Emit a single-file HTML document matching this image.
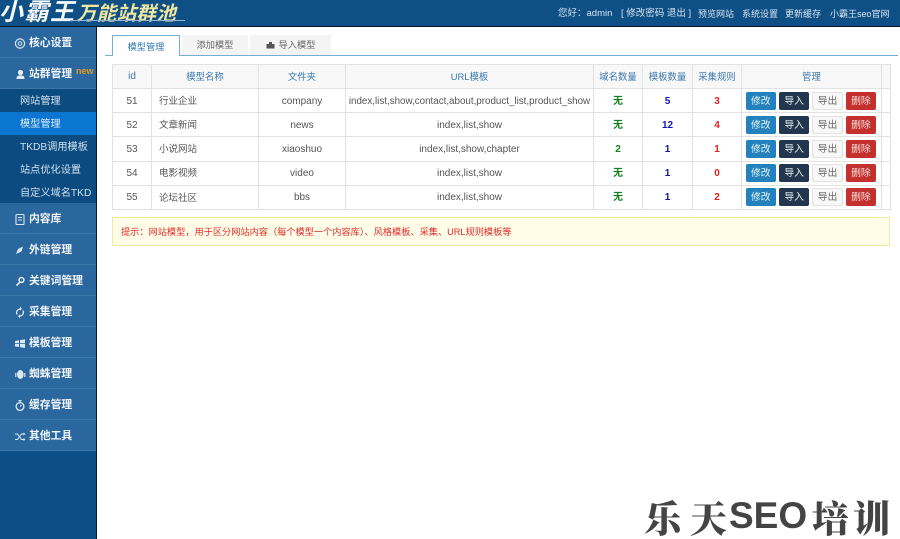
<!DOCTYPE html>
<html lang="zh"><head><meta charset="utf-8"><title>模型管理</title>
<style>
*{box-sizing:border-box}
html,body{margin:0;padding:0;width:900px;height:539px;overflow:hidden;background:#fff}
body{position:relative;font:9.5px/1 "Liberation Sans","Noto Sans CJK SC",sans-serif;color:#555}
.a{position:absolute;white-space:nowrap}
#hd{position:absolute;left:0;top:0;width:900px;height:27px;background:#0e4f86;border-bottom:1px solid #06192b}
#side{position:absolute;left:0;top:27px;width:97px;height:512px;background:#0c4e86;border-right:1px solid #06192b}
.m{position:absolute;left:0;width:96px;height:31px;background:#2a679f;border-bottom:1px solid #3d77aa;color:#f2f6fa;font-size:10.8px;font-weight:bold;line-height:32px;padding-left:29px;white-space:nowrap}
.m svg{position:absolute;left:14px;top:10px;width:12px;height:13px}
.s{position:absolute;left:0;width:96px;height:23px;color:#cfe0ee;font-size:10.2px;line-height:25px;padding-left:20px;white-space:nowrap}
.tab{position:absolute;top:35px;height:20px;background:#f4f4f4;color:#666;font-size:9.2px;line-height:21px;text-align:center}
table{position:absolute;left:112px;top:64px;width:778px;height:146px;border-collapse:collapse;table-layout:fixed;font-size:10px}
td,th{border:1px solid #e2e2e2;padding:0;text-align:center;overflow:hidden;white-space:nowrap}
th{background:#f8f8f8;color:#3a78ae;font-weight:normal;font-size:9.4px;height:24px}
td{color:#555;height:24.2px;padding-top:2px}
td.l{text-align:left;padding-left:7px;font-size:9.5px}
td:nth-child(8){padding:0 0 0 3.500px;text-align:left}
b.g{color:#14801e}b.b{color:#1414b4}b.r{color:#e02020}
.b1{display:inline-block;width:30.500px;height:18px;line-height:19px;border-radius:2px;font-size:9.800px;margin-right:2.900px;vertical-align:middle;text-align:center}
.x{background:#2382be;color:#e8f3fa}.y{background:#22364e;color:#eef1f4}.z{background:#f8f8f8;color:#666;border:1px solid #e2e2e2;line-height:17px}.w{background:#c4302c;color:#f6dcdc;margin-right:0}
.wm{position:absolute;top:493px;font:900 37px/46px 'Noto Serif CJK SC','Liberation Serif',serif;color:#444;white-space:nowrap}
</style></head><body>
<div id="hd">
<div class="a" style="left:-1px;top:-1px;font:italic bold 24px/28px 'Liberation Sans','Noto Sans CJK SC',sans-serif;color:#f4f8fb;letter-spacing:1.500px">小霸王</div>
<div class="a" style="left:77px;top:3px;font:italic bold 19.500px/23px 'Liberation Sans','Noto Sans CJK SC',sans-serif;color:#f0e6a0;letter-spacing:.300px">万能站群池</div>
<div class="a" style="left:70px;top:20px;width:115px;height:1px;background:#8fb4d4"></div>
<div class="a" style="left:558px;top:8px;font-size:9.500px;line-height:12px;color:#d6e4ef">您好：admin</div>
<div class="a" style="left:621px;top:8px;font-size:9.500px;line-height:12px;color:#d6e4ef">[ 修改密码 退出 ]</div>
<div class="a" style="left:698px;top:8px;font-size:9px;line-height:12px;color:#d6e4ef">预览网站</div>
<div class="a" style="left:742px;top:8px;font-size:9px;line-height:12px;color:#d6e4ef">系统设置</div>
<div class="a" style="left:785px;top:8px;font-size:9px;line-height:12px;color:#d6e4ef">更新缓存</div>
<div class="a" style="left:830px;top:8px;font-size:9px;line-height:12px;color:#d6e4ef">小霸王seo官网</div>
</div>
<div id="side"></div>
<div class="m" style="top:27px"><svg viewBox="0 0 12 13"><circle cx="6" cy="6.500" r="4.600" fill="none" stroke="#dbe7f1" stroke-width="1.200"/><circle cx="6" cy="6.500" r="1.800" fill="none" stroke="#dbe7f1"/></svg>核心设置</div>
<div class="m" style="top:58px"><svg viewBox="0 0 12 13"><circle cx="6.500" cy="4.500" r="2.600" fill="#e6eef5"/><path d="M2.500 11c0-3 1.500-3.600 4-3.600s4 .6 4 3.600z" fill="#e6eef5"/></svg>站群管理<span class="a" style="left:76px;top:8px;font:bold 9px/10px 'Liberation Sans',sans-serif;color:#e59b20">new</span></div>
<div class="a" style="left:0;top:89px;width:96px;height:114px;background:#0c4b80"></div>
<div class="s" style="top:89px">网站管理</div>
<div class="s" style="top:112px;background:#0a76d2;color:#dcecf8">模型管理</div>
<div class="s" style="top:135px">TKDB调用模板</div>
<div class="s" style="top:158px">站点优化设置</div>
<div class="s" style="top:181px">自定义域名TKD</div>
<div class="m" style="top:203px"><svg viewBox="0 0 12 13"><rect x="2" y="1.500" width="8" height="10" rx="1" fill="none" stroke="#dbe7f1" stroke-width="1.100"/><path d="M4 4.500h4M4 7h4" stroke="#dbe7f1"/></svg>内容库</div>
<div class="m" style="top:234px"><svg viewBox="0 0 12 13"><path d="M2 10l2-5 5-2.500-1.500 5z" fill="#dbe7f1"/></svg>外链管理</div>
<div class="m" style="top:265px"><svg viewBox="0 0 12 13"><circle cx="7.500" cy="5" r="2.400" fill="none" stroke="#e6eef5" stroke-width="1.500"/><path d="M6 7l-3.500 3.500" stroke="#e6eef5" stroke-width="1.600"/></svg>关键词管理</div>
<div class="m" style="top:296px"><svg viewBox="0 0 12 13"><path d="M3 8.500a3.800 3.800 0 0 1 3-5.500M9 4.500a3.800 3.800 0 0 1-3 5.500" fill="none" stroke="#dbe7f1" stroke-width="1.300"/><path d="M6 .8v4l2-2zM6 12.200v-4l-2 2z" fill="#dbe7f1"/></svg>采集管理</div>
<div class="m" style="top:327px"><svg viewBox="0 0 12 13"><path d="M1 4l4-.7v3H1zM6 3.100l5-.9v4.100H6zM1 7h4v3l-4-.6zM6 7h5v4l-5-.9z" fill="#dbe7f1"/></svg>模板管理</div>
<div class="m" style="top:358px"><svg viewBox="0 0 12 13"><ellipse cx="6.300" cy="6.500" rx="3.300" ry="4.500" fill="#dbe7f1"/><path d="M1.800 5v4M10.800 5v4" stroke="#dbe7f1" stroke-width="1.200"/></svg>蜘蛛管理</div>
<div class="m" style="top:389px"><svg viewBox="0 0 12 13"><circle cx="6" cy="7.500" r="3.900" fill="none" stroke="#e6eef5" stroke-width="1.300"/><path d="M4.500 1.500h3M6 1.500v2M6 7.500l1.500-1.500" stroke="#e6eef5" stroke-width="1.100"/></svg>缓存管理</div>
<div class="m" style="top:420px"><svg viewBox="0 0 12 13"><path d="M1 4h2.500l4 5.500H10M1 9.500h2.500l4-5.500H10" fill="none" stroke="#dbe7f1"/><path d="M9.500 2.500l2 1.500-2 1.500zM9.500 8l2 1.500-2 1.500z" fill="#dbe7f1"/></svg>其他工具</div>

<div class="a" style="left:105px;top:55px;width:793px;height:1px;background:#74aed0"></div>
<div class="tab" style="left:112px;top:35px;width:68px;height:21px;background:#fff;border:1px solid #74aed0;border-bottom:0;color:#2f75b0;line-height:23px">模型管理</div>
<div class="tab" style="left:182px;width:66px">添加模型</div>
<div class="tab" style="left:250px;width:81px"><svg width="9" height="9" viewBox="0 0 9 9" style="vertical-align:-1px;margin-right:4px"><path d="M3 4V2h3v2h2.500v4.500H.5V4z" fill="#555"/></svg>导入模型</div>

<table>
<colgroup><col style="width:39px"><col style="width:107px"><col style="width:87px"><col style="width:248px"><col style="width:49px"><col style="width:50px"><col style="width:49px"><col style="width:140px"><col style="width:9px"></colgroup>
<tr><th style="font-size:10px">id</th><th>模型名称</th><th>文件夹</th><th>URL模板</th><th>域名数量</th><th>模板数量</th><th>采集规则</th><th>管理</th><th></th></tr>
<tr><td>51</td><td class="l">行业企业</td><td>company</td><td style="font-size:9.800px">index,list,show,contact,about,product_list,product_show</td><td><b class="g">无</b></td><td><b class="b">5</b></td><td><b class="r">3</b></td><td><span class="b1 x">修改</span><span class="b1 y">导入</span><span class="b1 z">导出</span><span class="b1 w">删除</span></td><td></td></tr>
<tr><td>52</td><td class="l">文章新闻</td><td>news</td><td>index,list,show</td><td><b class="g">无</b></td><td><b class="b">12</b></td><td><b class="r">4</b></td><td><span class="b1 x">修改</span><span class="b1 y">导入</span><span class="b1 z">导出</span><span class="b1 w">删除</span></td><td></td></tr>
<tr><td>53</td><td class="l">小说网站</td><td>xiaoshuo</td><td>index,list,show,chapter</td><td><b class="g">2</b></td><td><b class="b">1</b></td><td><b class="r">1</b></td><td><span class="b1 x">修改</span><span class="b1 y">导入</span><span class="b1 z">导出</span><span class="b1 w">删除</span></td><td></td></tr>
<tr><td>54</td><td class="l">电影视频</td><td>video</td><td>index,list,show</td><td><b class="g">无</b></td><td><b class="b">1</b></td><td><b class="r">0</b></td><td><span class="b1 x">修改</span><span class="b1 y">导入</span><span class="b1 z">导出</span><span class="b1 w">删除</span></td><td></td></tr>
<tr><td>55</td><td class="l">论坛社区</td><td>bbs</td><td>index,list,show</td><td><b class="g">无</b></td><td><b class="b">1</b></td><td><b class="r">2</b></td><td><span class="b1 x">修改</span><span class="b1 y">导入</span><span class="b1 z">导出</span><span class="b1 w">删除</span></td><td></td></tr>
</table>

<div class="a" style="left:112px;top:217px;width:778px;height:29px;background:#fffde8;border:1px solid #f5e8a0;color:#e02a2a;font-size:9.200px;line-height:28px;padding-left:8px">提示：网站模型，用于区分网站内容（每个模型一个内容库）、风格模板、采集、URL规则模板等</div>

<div class="wm" style="left:644px">乐</div>
<div class="wm" style="left:690px">天</div>
<div class="wm" style="left:729px;font:bold 37px/46px 'Liberation Sans',sans-serif">SEO</div>
<div class="wm" style="left:812px">培</div>
<div class="wm" style="left:853px">训</div>
</body></html>
